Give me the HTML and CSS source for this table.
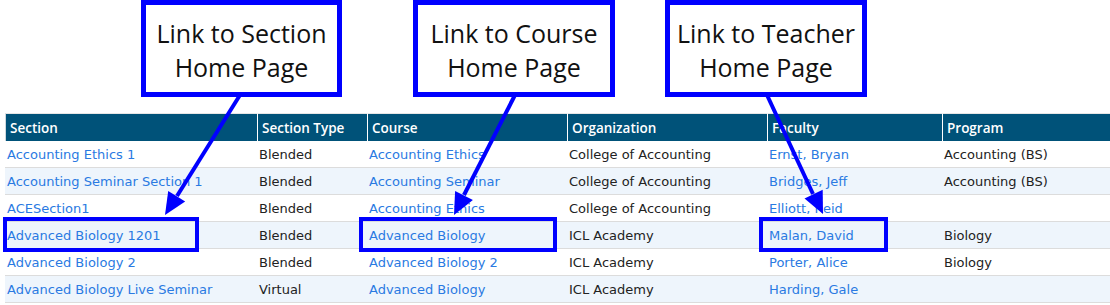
FILE: index.html
```html
<!DOCTYPE html>
<html>
<head>
<meta charset="utf-8">
<link rel="stylesheet" href="styles.css">
</head>
<body>
<div class="page">
  <div class="callouts">
    <div class="callout c-section">Link to Section<br>Home Page</div>
    <div class="callout c-course">Link to Course<br>Home Page</div>
    <div class="callout c-teacher">Link to Teacher<br>Home Page</div>
  </div>
  <table class="grid">
    <thead>
      <tr>
        <th class="w-section">Section</th>
        <th class="w-type">Section Type</th>
        <th class="w-course">Course</th>
        <th class="w-org">Organization</th>
        <th class="w-fac">Faculty</th>
        <th class="w-prog">Program</th>
      </tr>
    </thead>
    <tbody>
      <tr>
        <td><a href="#">Accounting Ethics 1</a></td>
        <td>Blended</td>
        <td><a href="#">Accounting Ethics</a></td>
        <td>College of Accounting</td>
        <td><a href="#">Ernst, Bryan</a></td>
        <td>Accounting (BS)</td>
      </tr>
      <tr class="alt">
        <td><a href="#">Accounting Seminar Section 1</a></td>
        <td>Blended</td>
        <td><a href="#">Accounting Seminar</a></td>
        <td>College of Accounting</td>
        <td><a href="#">Bridges, Jeff</a></td>
        <td>Accounting (BS)</td>
      </tr>
      <tr>
        <td><a href="#">ACESection1</a></td>
        <td>Blended</td>
        <td><a href="#">Accounting Ethics</a></td>
        <td>College of Accounting</td>
        <td><a href="#">Elliott, Reid</a></td>
        <td></td>
      </tr>
      <tr class="alt">
        <td><a href="#">Advanced Biology 1201</a></td>
        <td>Blended</td>
        <td><a href="#">Advanced Biology</a></td>
        <td>ICL Academy</td>
        <td><a href="#">Malan, David</a></td>
        <td>Biology</td>
      </tr>
      <tr>
        <td><a href="#">Advanced Biology 2</a></td>
        <td>Blended</td>
        <td><a href="#">Advanced Biology 2</a></td>
        <td>ICL Academy</td>
        <td><a href="#">Porter, Alice</a></td>
        <td>Biology</td>
      </tr>
      <tr class="alt">
        <td><a href="#">Advanced Biology Live Seminar</a></td>
        <td>Virtual</td>
        <td><a href="#">Advanced Biology</a></td>
        <td>ICL Academy</td>
        <td><a href="#">Harding, Gale</a></td>
        <td></td>
      </tr>
    </tbody>
  </table>
  <div class="mark m-section"></div>
  <div class="mark m-course"></div>
  <div class="mark m-fac"></div>
  <svg class="arrows" width="1110" height="305" viewBox="0 0 1110 305">
    <g stroke="#0000ff" stroke-width="4" fill="none">
      <line x1="240" y1="95" x2="177" y2="196"/>
      <line x1="515" y1="95" x2="464" y2="195"/>
      <line x1="767" y1="95" x2="813" y2="194"/>
    </g>
    <g fill="#0000ff">
      <polygon points="165,215 185.2,201.6 168.2,191"/>
      <polygon points="454,215 472.9,199.9 455.1,190.9"/>
      <polygon points="823,214 804.5,198.4 822.7,189.8"/>
    </g>
  </svg>
</div>
</body>
</html>
```
FILE: styles.css
```css
html, body {
  margin: 0;
  padding: 0;
  background: #ffffff;
}

.page {
  position: relative;
  width: 1110px;
  height: 305px;
  overflow: hidden;
}

.callouts {
  position: relative;
  height: 113px;
}

.callout {
  position: absolute;
  top: 0;
  height: 97px;
  box-sizing: border-box;
  border: 5px solid #0000ff;
  background: #ffffff;
  font-family: "Open Sans", "Liberation Sans", sans-serif;
  font-size: 25px;
  font-weight: 500;
  line-height: 34px;
  color: #111111;
  text-align: center;
  display: flex;
  align-items: center;
  justify-content: center;
  padding-top: 2px;
}

.c-section { left: 141px; width: 201px; }
.c-course { left: 413px; width: 202px; }
.c-teacher { left: 665px; width: 202px; }

.grid {
  margin-left: 5px;
  border-collapse: separate;
  border-spacing: 0;
  table-layout: fixed;
  width: 1136px;
  font-family: "DejaVu Sans", Verdana, sans-serif;
  font-size: 13px;
  color: #222222;
}

.grid th {
  box-sizing: border-box;
  height: 28px;
  padding: 0 0 0 4px;
  background: #005279;
  color: #ffffff;
  font-family: "Open Sans", "Liberation Sans", sans-serif;
  font-weight: 600;
  font-size: 13.5px;
  text-align: left;
  border-top: 1px solid #e6e6e6;
  border-left: 1px solid #ffffff;
  white-space: nowrap;
}

.grid th.w-section { border-left-color: #cfd8de; }

.w-section { width: 252px; }
.w-type { width: 110px; }
.w-course { width: 200px; }
.w-org { width: 200px; }
.w-fac { width: 175px; }
.w-prog { width: 199px; }

.grid td {
  height: 26px;
  padding: 0 0 0 2px;
  border-bottom: 1px solid #dcdcdc;
  white-space: nowrap;
  vertical-align: middle;
}

.grid tr.alt td { background: #eef5fc; }

.grid a {
  color: #2a7ae2;
  text-decoration: none;
}

.mark {
  position: absolute;
  top: 217px;
  height: 35px;
  box-sizing: border-box;
  border: 4px solid #0000ff;
}

.m-section { left: 3px; width: 196px; }
.m-course { left: 359px; width: 198px; }
.m-fac { left: 759px; width: 129px; }

.arrows {
  position: absolute;
  left: 0;
  top: 0;
  pointer-events: none;
}
```
